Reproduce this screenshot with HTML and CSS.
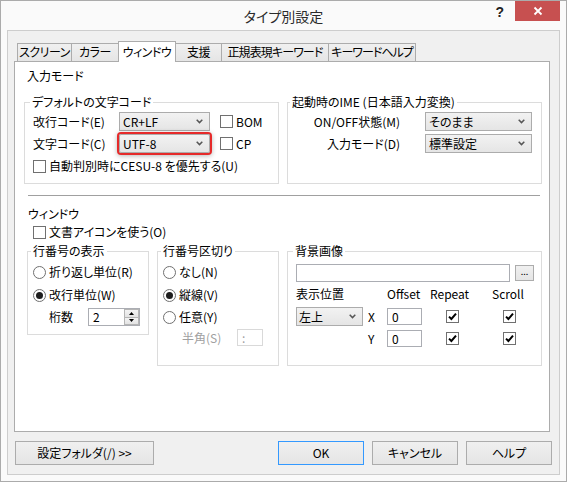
FILE: index.html
```html
<!DOCTYPE html>
<html lang="ja">
<head>
<meta charset="utf-8">
<title>タイプ別設定</title>
<link rel="stylesheet" href="styles.css">
</head>
<body>
<div class="window">
  <div class="titlebar">
    <div></div>
    <div class="title">タイプ別設定</div>
    <div class="caption">
      <span class="help">?</span>
      <span class="close"><svg width="10" height="10" viewBox="0 0 10 10"><path d="M1.5 1.5L8.5 8.5M8.5 1.5L1.5 8.5" stroke="#fff" stroke-width="1.8" fill="none"/></svg></span>
    </div>
  </div>
  <div class="client">
    <div class="tabs">
      <div class="tab t1">スクリーン</div>
      <div class="tab t2">カラー</div>
      <div class="tab t3 sel">ウィンドウ</div>
      <div class="tab t4">支援</div>
      <div class="tab t5">正規表現キーワード</div>
      <div class="tab t6">キーワードヘルプ</div>
    </div>
    <div class="panel">
      <div class="label l-mode">入力モード</div>
      <div class="top-row">
        <div class="group g-code">
          <div class="legend lg8">デフォルトの文字コード</div>
          <div class="code-grid">
            <span>改行コード(E)</span>
            <div class="combo">CR+LF<svg class="arr" width="7" height="5" viewBox="0 0 7 5"><path d="M0.7 0.8L3.5 3.6L6.3 0.8" stroke="#555" stroke-width="1.5" fill="none"/></svg></div>
            <div class="chk ml10"><span class="cb"></span>BOM</div>
            <span>文字コード(C)</span>
            <div class="combo hl">UTF-8<svg class="arr" width="7" height="5" viewBox="0 0 7 5"><path d="M0.7 0.8L3.5 3.6L6.3 0.8" stroke="#555" stroke-width="1.5" fill="none"/></svg></div>
            <div class="chk ml10"><span class="cb"></span>CP</div>
          </div>
          <div class="chk cesu"><span class="cb"></span>自動判別時にCESU-8 を優先する(U)</div>
        </div>
        <div class="group g-ime">
          <div class="legend lg5">起動時のIME (日本語入力変換)</div>
          <div class="ime-grid">
            <span>ON/OFF状態(M)</span>
            <div class="combo">そのまま<svg class="arr" width="7" height="5" viewBox="0 0 7 5"><path d="M0.7 0.8L3.5 3.6L6.3 0.8" stroke="#555" stroke-width="1.5" fill="none"/></svg></div>
            <span>入力モード(D)</span>
            <div class="combo">標準設定<svg class="arr" width="7" height="5" viewBox="0 0 7 5"><path d="M0.7 0.8L3.5 3.6L6.3 0.8" stroke="#555" stroke-width="1.5" fill="none"/></svg></div>
          </div>
        </div>
      </div>
      <div class="sep"></div>
      <div class="label l-win">ウィンドウ</div>
      <div class="chk doc"><span class="cb"></span>文書アイコンを使う(O)</div>
      <div class="bottom-row">
        <div class="group g-ln">
          <div class="legend lg6">行番号の表示</div>
          <div class="rows">
            <div class="row r1"><span class="rb"></span>折り返し単位(R)</div>
            <div class="row r2"><span class="rb on"></span>改行単位(W)</div>
            <div class="row r3">
              <span class="keta">桁数</span>
              <div class="spin">
                <span class="spin-val">2</span>
                <span class="spin-btns">
                  <span class="sb"><svg width="5" height="3" viewBox="0 0 5 3"><path d="M0 3L2.5 0L5 3Z" fill="#000"/></svg></span>
                  <span class="sb"><svg width="5" height="3" viewBox="0 0 5 3"><path d="M0 0L5 0L2.5 3Z" fill="#000"/></svg></span>
                </span>
              </div>
            </div>
          </div>
        </div>
        <div class="group g-sep">
          <div class="legend lg6">行番号区切り</div>
          <div class="rows">
            <div class="row r1"><span class="rb"></span>なし(N)</div>
            <div class="row r2"><span class="rb on"></span>縦線(V)</div>
            <div class="row r3"><span class="rb"></span>任意(Y)</div>
            <div class="row r4">
              <span class="hankaku">半角(S)</span>
              <span class="dis-box">:</span>
            </div>
          </div>
        </div>
        <div class="group g-bg">
          <div class="legend lg8">背景画像</div>
          <div class="field-row">
            <span class="field"></span>
            <span class="mini-btn">...</span>
          </div>
          <div class="bg-head">
            <span class="h1">表示位置</span>
            <span class="h2">Offset</span>
            <span class="h3">Repeat</span>
            <span class="h4">Scroll</span>
          </div>
          <div class="bg-grid">
            <div class="combo pos">左上<svg class="arr" width="7" height="5" viewBox="0 0 7 5"><path d="M0.7 0.8L3.5 3.6L6.3 0.8" stroke="#555" stroke-width="1.5" fill="none"/></svg></div>
            <span class="axis">X</span>
            <span class="num">0</span>
            <span class="cb on c-rep"><svg width="11" height="11" viewBox="0 0 11 11"><path d="M2 5.6L4.4 8L9 2.6" stroke="#000" stroke-width="2" fill="none"/></svg></span>
            <span class="cb on c-scr"><svg width="11" height="11" viewBox="0 0 11 11"><path d="M2 5.6L4.4 8L9 2.6" stroke="#000" stroke-width="2" fill="none"/></svg></span>
            <span></span>
            <span class="axis">Y</span>
            <span class="num">0</span>
            <span class="cb on c-rep"><svg width="11" height="11" viewBox="0 0 11 11"><path d="M2 5.6L4.4 8L9 2.6" stroke="#000" stroke-width="2" fill="none"/></svg></span>
            <span class="cb on c-scr"><svg width="11" height="11" viewBox="0 0 11 11"><path d="M2 5.6L4.4 8L9 2.6" stroke="#000" stroke-width="2" fill="none"/></svg></span>
          </div>
        </div>
      </div>
    </div>
    <div class="btn-row">
      <div class="btn b-folder">設定フォルダ(/) &gt;&gt;</div>
      <div class="btn b-ok">OK</div>
      <div class="btn">キャンセル</div>
      <div class="btn">ヘルプ</div>
    </div>
  </div>
</div>
</body>
</html>
```
FILE: styles.css
```css
* { box-sizing: border-box; }
html, body { margin: 0; padding: 0; }
body {
  width: 567px;
  height: 482px;
  overflow: hidden;
  font-family: "Noto Sans CJK JP", "Noto Sans", sans-serif;
  font-size: 12px;
  line-height: 16px;
  color: #000;
  font-feature-settings: "palt";
  background: #fafafa;
}
.window {
  width: 567px;
  height: 482px;
  border: 1px solid #ababab;
  background: #fafafa;
}
.titlebar {
  height: 29px;
  display: grid;
  grid-template-columns: 1fr auto 1fr;
}
.title {
  font-size: 14px;
  line-height: 30px;
  color: #2b2b2b;
}
.caption {
  display: flex;
  justify-content: flex-end;
  align-items: flex-start;
}
.help {
  font: bold 14px/16px "Liberation Sans", sans-serif;
  color: #222;
  margin: 3px 11px 0 0;
}
.close {
  width: 45px;
  height: 20px;
  margin-right: 6px;
  background: #c75050;
  display: flex;
  align-items: center;
  justify-content: center;
}
.client {
  margin-left: 6px;
  width: 553px;
  height: 445px;
  border: 1px solid #cdcdcd;
  background: #f0f0f0;
  padding: 10px 7px 0 6px;
}
.tabs {
  display: flex;
  align-items: flex-end;
  height: 20px;
  padding-left: 3px;
}
.tab {
  height: 18px;
  border: 1px solid #acacac;
  border-bottom: 0;
  background: linear-gradient(#f0f0f0, #e5e5e5);
  text-align: center;
  white-space: nowrap;
  line-height: 16px;
  letter-spacing: -0.5px;
  margin-left: -1px;
  overflow: hidden;
}
.tab.t1 { width: 55px; margin-left: 0; }
.tab.t2 { width: 48px; }
.tab.t3 { width: 58px; }
.tab.t4 { width: 47px; }
.tab.t5 { width: 108px; letter-spacing: -0.9px; }
.tab.t6 { width: 88px; letter-spacing: -1px; }
.tab.sel {
  height: 21px;
  margin-bottom: -1px;
  background: #fff;
  position: relative;
  z-index: 1;
  padding-top: 2px;
}
.panel {
  width: 536px;
  height: 371px;
  border: 1px solid #acacac;
  background: #fff;
}
.label { white-space: nowrap; }
.l-mode { margin: 6px 0 0 12px; }
.top-row {
  display: flex;
  gap: 8px;
  margin: 18px 0 0 9px;
}
.group {
  border: 1px solid #dcdcdc;
  background: #fff;
}
.legend {
  width: max-content;
  margin-top: -9px;
  padding: 0 2px;
  background: #fff;
  white-space: nowrap;
}
.lg8 { margin-left: 5px; }
.lg6 { margin-left: 3px; }
.lg5 { margin-left: 2px; }
.g-code, .g-ime { width: 255px; height: 82px; }
.code-grid {
  display: grid;
  grid-template-columns: 86px 91px auto;
  grid-auto-rows: 19px;
  row-gap: 3px;
  align-items: center;
  margin-top: 2px;
  padding-left: 8px;
  white-space: nowrap;
}
.ime-grid {
  display: grid;
  grid-template-columns: 112px 107px;
  column-gap: 25px;
  grid-auto-rows: 19px;
  row-gap: 3px;
  align-items: center;
  margin-top: 2px;
  white-space: nowrap;
}
.ime-grid > span { justify-self: end; }
.combo {
  height: 19px;
  border: 1px solid #acacac;
  background: linear-gradient(#f2f2f2, #e5e5e5);
  display: flex;
  align-items: center;
  justify-content: space-between;
  padding: 0 6px 0 3px;
  white-space: nowrap;
}
.combo.hl {
  border-radius: 2px;
  box-shadow: 0 0 0 2px #e62a2a, 0 1px 5px 2px rgba(0, 0, 0, 0.28);
}
.arr { flex: none; }
.chk {
  display: flex;
  align-items: center;
  gap: 3px;
  white-space: nowrap;
}
.ml10 { margin-left: 10px; }
.cb {
  flex: none;
  width: 13px;
  height: 13px;
  border: 1px solid #707070;
  background: #fff;
  display: inline-flex;
  align-items: center;
  justify-content: center;
}
.cesu { margin: 5px 0 0 8px; height: 16px; }
.sep {
  margin: 11px 0 0 13px;
  width: 512px;
  height: 1px;
  background: #a0a0a0;
}
.l-win { margin: 10px 0 0 13px; }
.doc { margin: 2px 0 0 18px; height: 16px; }
.bottom-row {
  display: flex;
  align-items: flex-start;
  gap: 8px;
  margin: 11px 0 0 12px;
}
.g-ln { width: 122px; height: 84px; }
.g-sep { width: 122px; height: 115px; }
.g-bg { width: 255px; height: 115px; }
.rows { padding-left: 5px; }
.row {
  display: flex;
  align-items: center;
  gap: 3px;
  white-space: nowrap;
}
.r1 { margin-top: 5px; height: 16px; }
.r2 { margin-top: 7px; height: 16px; }
.r3 { margin-top: 5px; height: 18px; }
.r4 { margin-top: 3px; height: 17px; gap: 0; }
.rb {
  flex: none;
  width: 13px;
  height: 13px;
  border-radius: 50%;
  border: 1px solid #707070;
  background: #fff;
  display: inline-flex;
  align-items: center;
  justify-content: center;
}
.rb.on::after {
  content: "";
  width: 7px;
  height: 7px;
  border-radius: 50%;
  background: #1e1e1e;
}
.keta { width: 39px; margin-left: 16px; }
.spin {
  width: 52px;
  height: 18px;
  border: 1px solid #abadb3;
  background: #fff;
  display: flex;
  margin-left: -3px;
}
.spin-val { flex: 1; padding-left: 4px; line-height: 16px; }
.spin-btns {
  width: 15px;
  display: flex;
  flex-direction: column;
}
.sb {
  flex: 1;
  border: 1px solid #b5b5b5;
  background: linear-gradient(#f3f3f3, #e3e3e3);
  display: flex;
  align-items: center;
  justify-content: center;
}
.sb + .sb { border-top: 0; }
.hankaku { width: 55px; margin-left: 19px; color: #a0a0a0; }
.dis-box {
  width: 26px;
  height: 17px;
  border: 1px solid #d9d9d9;
  background: #fff;
  color: #a0a0a0;
  padding-left: 4px;
  line-height: 15px;
}
.field-row {
  display: flex;
  align-items: center;
  gap: 5px;
  margin-top: 5px;
  height: 18px;
  padding-left: 8px;
}
.field {
  width: 214px;
  height: 18px;
  border: 1px solid #abadb3;
  background: #fff;
}
.mini-btn {
  width: 19px;
  height: 16px;
  border: 1px solid #acacac;
  background: linear-gradient(#f0f0f0, #e5e5e5);
  font-size: 9px;
  line-height: 12px;
  text-align: center;
}
.bg-head {
  display: flex;
  margin-top: 4px;
  height: 16px;
  padding-left: 8px;
  white-space: nowrap;
}
.h1 { width: 91px; }
.h2 { width: 43px; }
.h3 { width: 62px; }
.bg-grid {
  display: grid;
  grid-template-columns: 67px 24px 35px 59px 57px;
  grid-template-rows: 19px 19px;
  row-gap: 3px;
  align-items: center;
  margin-top: 5px;
  padding-left: 8px;
}
.pos { padding-left: 2px; }
.axis { padding-left: 5px; }
.num {
  height: 17px;
  border: 1px solid #abadb3;
  background: #fff;
  padding-left: 4px;
  line-height: 15px;
}
.c-rep { margin-left: 24px; }
.c-scr { margin-left: 22px; }
.btn-row {
  display: flex;
  gap: 8px;
  margin-top: 9px;
  height: 24px;
}
.btn {
  width: 86px;
  height: 24px;
  border: 1px solid #acacac;
  background: linear-gradient(#f0f0f0, #e5e5e5);
  display: flex;
  align-items: center;
  justify-content: center;
  white-space: nowrap;
}
.b-folder { width: 139px; margin-left: 1px; }
.b-ok { margin-left: auto; border-color: #3399ff; }
```
